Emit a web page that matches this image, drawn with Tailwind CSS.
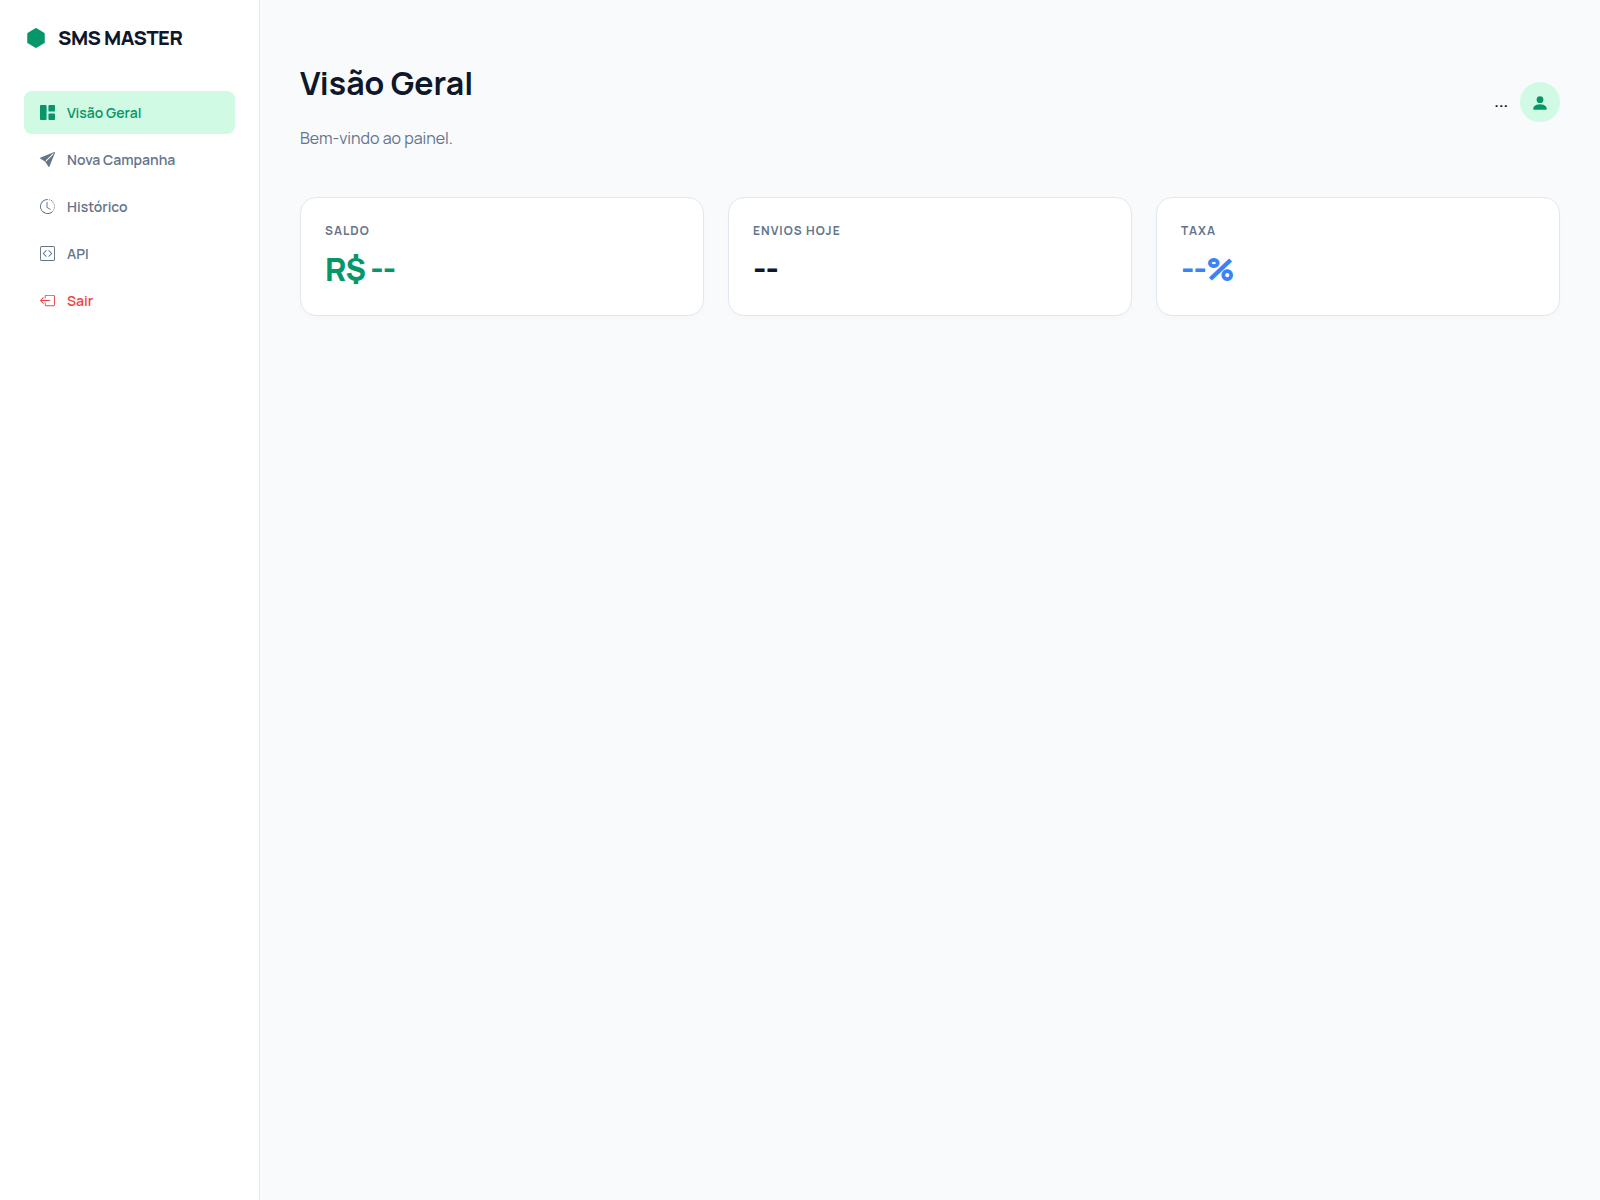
<!DOCTYPE html>
<html lang="pt-BR">
<head>
    <meta charset="UTF-8">
    <meta name="viewport" content="width=device-width, initial-scale=1.0">
    <title>SMS Master</title>
    <script src="https://cdn.jsdelivr.net/npm/@tailwindcss/browser@4"></script>
</head>
<body class="flex min-h-screen bg-[#f8fafc] font-[Manrope,Inter,sans-serif] text-[#0f172a]">
    <!-- Menu lateral -->
    <aside class="w-[260px] shrink-0 border-r border-[#e2e8f0] bg-white p-6">
        <div class="mb-10 flex h-[27px] items-center gap-[10px] text-xl font-extrabold tracking-tight">
            <span class="flex w-6 justify-center text-[#059669]">
                <svg class="size-5" viewBox="0 0 16 16" fill="currentColor" aria-hidden="true"><path d="M8.5.134a1 1 0 0 0-1 0l-6 3.577a1 1 0 0 0-.5.866v6.846a1 1 0 0 0 .5.866l6 3.577a1 1 0 0 0 1 0l6-3.577a1 1 0 0 0 .5-.866V4.577a1 1 0 0 0-.5-.866z"/></svg>
            </span>
            SMS MASTER
        </div>

        <nav class="flex flex-col gap-1 text-sm/[19px] font-semibold text-[#64748b]">
            <a href="#dashboard" class="flex items-center gap-3 rounded-lg bg-[#d1fae5] px-4 py-3 text-[#059669]">
                <svg class="size-[15px]" viewBox="0 0 16 16" fill="currentColor" aria-hidden="true"><path d="M0 1a1 1 0 0 1 1-1h5a1 1 0 0 1 1 1v14a1 1 0 0 1-1 1H1a1 1 0 0 1-1-1zm9 0a1 1 0 0 1 1-1h5a1 1 0 0 1 1 1v5a1 1 0 0 1-1 1h-5a1 1 0 0 1-1-1zm0 9a1 1 0 0 1 1-1h5a1 1 0 0 1 1 1v5a1 1 0 0 1-1 1h-5a1 1 0 0 1-1-1z"/></svg>
                Visão Geral
            </a>
            <a href="#campanha" class="flex items-center gap-3 rounded-lg px-4 py-3 hover:bg-[#f1f5f9]">
                <svg class="size-[15px]" viewBox="0 0 16 16" fill="currentColor" aria-hidden="true"><path d="M15.964.686a.5.5 0 0 0-.65-.65L.767 5.855H.766l-.452.18a.5.5 0 0 0-.082.887l.41.26.001.002 4.995 3.178 3.178 4.995.002.002.26.41a.5.5 0 0 0 .886-.083zm-1.833 1.89L6.637 10.07l-.215-.338a.5.5 0 0 0-.154-.154l-.338-.215 7.494-7.494 1.178-.471z"/></svg>
                Nova Campanha
            </a>
            <a href="#historico" class="flex items-center gap-3 rounded-lg px-4 py-3 hover:bg-[#f1f5f9]">
                <svg class="size-[15px]" viewBox="0 0 16 16" fill="currentColor" aria-hidden="true">
                    <path d="M8.515 1.019A7 7 0 0 0 8 1V0a8 8 0 0 1 .589.022zm2.004.45a7 7 0 0 0-.985-.299l.219-.976q.576.129 1.126.342zm1.37.71a7 7 0 0 0-.439-.27l.493-.87a8 8 0 0 1 .979.654l-.615.789a7 7 0 0 0-.418-.302zm1.834 1.79a7 7 0 0 0-.653-.796l.724-.69q.406.429.747.91zm.744 1.352a7 7 0 0 0-.214-.468l.893-.45a8 8 0 0 1 .45 1.088l-.95.313a7 7 0 0 0-.179-.483m.53 2.507a7 7 0 0 0-.1-1.025l.985-.17q.1.58.116 1.17zm-.131 1.538q.05-.254.081-.51l.993.123a8 8 0 0 1-.23 1.155l-.964-.267q.069-.247.12-.501m-.952 2.379q.276-.436.486-.908l.914.405q-.24.54-.555 1.038zm-.964 1.205q.183-.183.35-.378l.758.653a8 8 0 0 1-.401.432z"/>
                    <path d="M8 1a7 7 0 1 0 4.95 11.95l.707.707A8.001 8.001 0 1 1 8 0z"/>
                    <path d="M7.5 3a.5.5 0 0 1 .5.5v5.21l3.248 1.856a.5.5 0 0 1-.496.868l-3.5-2A.5.5 0 0 1 7 9V3.5a.5.5 0 0 1 .5-.5"/>
                </svg>
                Histórico
            </a>
            <a href="#api" class="flex items-center gap-3 rounded-lg px-4 py-3 hover:bg-[#f1f5f9]">
                <svg class="size-[15px]" viewBox="0 0 16 16" fill="currentColor" aria-hidden="true">
                    <path d="M14 1a1 1 0 0 1 1 1v12a1 1 0 0 1-1 1H2a1 1 0 0 1-1-1V2a1 1 0 0 1 1-1zM2 0a2 2 0 0 0-2 2v12a2 2 0 0 0 2 2h12a2 2 0 0 0 2-2V2a2 2 0 0 0-2-2z"/>
                    <path d="M6.854 4.646a.5.5 0 0 1 0 .708L4.207 8l2.647 2.646a.5.5 0 0 1-.708.708l-3-3a.5.5 0 0 1 0-.708l3-3a.5.5 0 0 1 .708 0m2.292 0a.5.5 0 0 0 0 .708L11.793 8l-2.647 2.646a.5.5 0 0 0 .708.708l3-3a.5.5 0 0 0 0-.708l-3-3a.5.5 0 0 0-.708 0"/>
                </svg>
                API
            </a>
            <a href="#sair" class="flex items-center gap-3 rounded-lg px-4 py-3 text-[#ef4444] hover:bg-[#f1f5f9]">
                <svg class="size-[15px]" viewBox="0 0 16 16" fill="currentColor" aria-hidden="true">
                    <path d="M6 12.5a.5.5 0 0 0 .5.5h8a.5.5 0 0 0 .5-.5v-9a.5.5 0 0 0-.5-.5h-8a.5.5 0 0 0-.5.5v2a.5.5 0 0 1-1 0v-2A1.5 1.5 0 0 1 6.5 2h8A1.5 1.5 0 0 1 16 3.5v9a1.5 1.5 0 0 1-1.5 1.5h-8A1.5 1.5 0 0 1 5 12.5v-2a.5.5 0 0 1 1 0z"/>
                    <path d="M.146 8.354a.5.5 0 0 1 0-.708l3-3a.5.5 0 1 1 .708.708L1.707 7.5H10.5a.5.5 0 0 1 0 1H1.707l2.147 2.146a.5.5 0 0 1-.708.708z"/>
                </svg>
                Sair
            </a>
        </nav>
    </aside>

    <main class="flex-1 p-10">
        <header class="mb-[33px] flex items-center justify-between">
            <div class="pt-[21px] pb-[15px]">
                <h1 class="mb-[22px] text-[32px]/[44px] font-bold">Visão Geral</h1>
                <p class="text-base/[22px] text-[#64748b]">Bem-vindo ao painel.</p>
            </div>
            <div class="flex items-center gap-3">
                <span class="text-[15px]/[24px] font-bold">...</span>
                <div class="flex size-10 items-center justify-center rounded-full bg-[#d1fae5] pt-0.5 text-[#059669]">
                    <svg class="size-[18px]" viewBox="0 0 16 16" fill="currentColor" aria-hidden="true"><path d="M3 14s-1 0-1-1 1-4 6-4 6 3 6 4-1 1-1 1zm5-6a3 3 0 1 0 0-6 3 3 0 0 0 0 6"/></svg>
                </div>
            </div>
        </header>

        <!-- Indicadores -->
        <section class="grid grid-cols-3 gap-6">
            <div class="rounded-2xl border border-[#e2e8f0] bg-white p-6 shadow-[0_4px_6px_-1px_rgba(0,0,0,0.02)]">
                <div class="mb-2 text-xs/[17px] font-bold tracking-[1px] text-[#64748b]">SALDO</div>
                <div class="text-[32px]/[44px] font-extrabold tracking-[-1px] text-[#059669]">R$ --</div>
            </div>
            <div class="rounded-2xl border border-[#e2e8f0] bg-white p-6 shadow-[0_4px_6px_-1px_rgba(0,0,0,0.02)]">
                <div class="mb-2 text-xs/[17px] font-bold tracking-[1px] text-[#64748b]">ENVIOS HOJE</div>
                <div class="text-[32px]/[44px] font-extrabold tracking-[-1px]">--</div>
            </div>
            <div class="rounded-2xl border border-[#e2e8f0] bg-white p-6 shadow-[0_4px_6px_-1px_rgba(0,0,0,0.02)]">
                <div class="mb-2 text-xs/[17px] font-bold tracking-[1px] text-[#64748b]">TAXA</div>
                <div class="text-[32px]/[44px] font-extrabold tracking-[-1px] text-[#3b82f6]">--%</div>
            </div>
        </section>
    </main>
</body>
</html>
